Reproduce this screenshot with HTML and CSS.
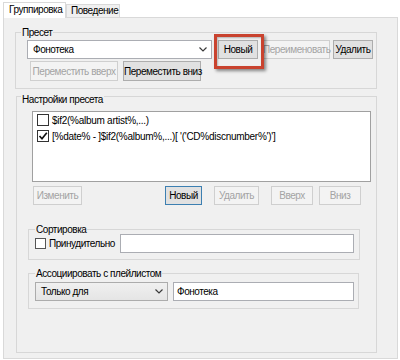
FILE: index.html
```html
<!DOCTYPE html>
<html lang="ru">
<head>
  <meta charset="UTF-8">
  <title>Группировка</title>
  <link rel="stylesheet" href="styles.css">
</head>
<body>
  <div class="tabs">
    <div class="tab tab-active">Группировка</div>
    <div class="tab">Поведение</div>
  </div>
  <div class="page">
    <div class="group group-preset">
      <div class="group-title">Пресет</div>
      <div class="preset-body">
        <div class="row row-top">
          <div class="combo combo-edit">
            <span>Фонотека</span>
            <svg class="chev" viewBox="0 0 8 5"><polyline points="0.5,0.5 4,4 7.5,0.5"/></svg>
          </div>
          <div class="mark-wrap">
            <button class="btn btn-new">Новый</button>
            <span class="mark"></span>
          </div>
          <button class="btn btn-rename" disabled>Переименовать</button>
          <button class="btn btn-delete">Удалить</button>
        </div>
        <div class="row row-move">
          <button class="btn btn-up" disabled>Переместить вверх</button>
          <button class="btn btn-down">Переместить вниз</button>
        </div>
      </div>
    </div>

    <div class="group group-settings">
      <div class="group-title title-settings">Настройки пресета</div>
      <div class="settings-body">
        <div class="listbox">
          <div class="item">
            <span class="check"></span>
            <span>$if2(%album artist%,...)</span>
          </div>
          <div class="item">
            <span class="check"><svg viewBox="0 0 10 10"><path d="M1.5 5 L4 7.8 L8.8 1.8"/></svg></span>
            <span>[%date% - ]$if2(%album%,...)[ '('CD%discnumber%')']</span>
          </div>
        </div>
        <div class="row row-actions">
          <button class="btn btn-edit" disabled>Изменить</button>
          <button class="btn btn-add">Новый</button>
          <button class="btn btn-remove" disabled>Удалить</button>
          <button class="btn btn-upward" disabled>Вверх</button>
          <button class="btn btn-downward" disabled>Вниз</button>
        </div>

        <div class="group group-sort">
          <div class="group-title title-inner">Сортировка</div>
          <div class="row sort-body">
            <span class="check check-small"></span>
            <span class="force-label">Принудительно</span>
            <div class="field field-sort"></div>
          </div>
        </div>

        <div class="group group-assoc">
          <div class="group-title title-assoc">Ассоциировать с плейлистом</div>
          <div class="row assoc-body">
            <div class="combo combo-list">
              <span>Только для</span>
              <svg class="chev" viewBox="0 0 8 5"><polyline points="0.5,0.5 4,4 7.5,0.5"/></svg>
            </div>
            <div class="field field-assoc">Фонотека</div>
          </div>
        </div>
      </div>
    </div>
  </div>
</body>
</html>
```

FILE: styles.css
```css
* { box-sizing: border-box; }
body { margin: 0; background: #fff; color: #000; white-space: nowrap;
       font-family: "Liberation Sans", Arial, sans-serif; font-size: 10px; letter-spacing: -0.45px; }

.tabs { display: flex; align-items: flex-end; height: 17px; padding-left: 3px; }
.tab { width: 54px; height: 13px; line-height: 12px; padding-left: 4px;
       border: 1px solid #d9d9d9; border-bottom: none; background: #f0f0f0; }
.tab-active { position: relative; width: 63px; height: 16px; line-height: 14px;
              padding-left: 5px; margin-bottom: -1px; background: #fff; }

.page { margin-left: 3px; width: 395px; height: 342px; padding: 14px 0 0 11px;
        border: 1px solid #d9d9d9; background: #f0f0f0; }

.group { border: 1px solid #d7d7d7; }
.group-title { width: fit-content; padding: 0 1px; line-height: 14px;
               margin: -7px 0 0 5px; background: #f0f0f0; }

.row { display: flex; align-items: center; }

/* buttons */
.btn { font: inherit; letter-spacing: inherit; color: #000; height: 19px; padding: 0;
       white-space: nowrap; border: 1px solid #adadad; background: #e1e1e1; }
.btn:disabled { color: #a3a3a3; border-color: #cfcfcf; background: #f3f3f3; }

/* preset */
.group-preset { width: 362px; height: 57px; }
.preset-body { padding: 0 3px 0 11px; }
.row-top { height: 19px; }
.combo { height: 19px; display: flex; align-items: center; justify-content: space-between;
         padding: 0 4px 0 5px; border: 1px solid #abadb3; }
.combo-edit { width: 185px; background: #fff; }
.chev { width: 8px; height: 5px; fill: none; stroke: #3a3a3a; stroke-width: 1.2; }
.mark-wrap { position: relative; margin-left: 6px; }
.btn-new { width: 40px; display: block; }
.mark { position: absolute; left: -4px; top: -6px; width: 50px; height: 35px;
        border: 3px solid #c9432f;
        box-shadow: 2px 2px 3px rgba(0,0,0,0.45), inset 1px 1px 2px rgba(0,0,0,0.25); }
.btn-rename { width: 68px; margin-left: 4px; }
.btn-delete { width: 40px; margin-left: 3px; }
.row-move { margin: 2px 0 0 3px; }
.row-move .btn { height: 20px; }
.btn-up { width: 88px; }
.btn-down { width: 78px; margin-left: 5px; }

/* preset settings */
.group-settings { width: 361px; height: 257px; margin: 7px 0 0 1px; }
.title-settings { margin: -4px 0 0 4px; }
.settings-body { padding: 4px 0 0 11px; }
.listbox { width: 339px; height: 71px; margin-left: 4px; padding: 0 0 0 4px;
           border: 1px solid #a0a0a0; background: #fff; letter-spacing: -0.27px; }
.item { display: flex; align-items: center; height: 16px; }
.check { width: 12px; height: 12px; margin-right: 3px; border: 1px solid #333;
         background: #fff; display: flex; }
.check svg { width: 10px; height: 10px; fill: none; stroke: #111; stroke-width: 1.7; }
.row-actions { margin-top: 4px; }
.btn-edit { width: 49px; margin-left: 5px; }
.btn-add { width: 37px; margin-left: 83px; border-color: #3c7fb1; }
.btn-remove { width: 45px; margin-left: 12px; }
.btn-upward { width: 42px; margin-left: 12px; }
.btn-downward { width: 42px; margin-left: 6px; }

.title-inner { margin: -7px 0 -3px 6px; }
.title-assoc { margin: -7px 0 0 6px; }

.group-sort { width: 332px; height: 31px; margin-top: 24px; }
.sort-body { height: 19px; padding: 0 5px 0 6px; }
.check-small { width: 11px; height: 11px; margin-right: 3px; border-color: #555; }
.field { height: 19px; line-height: 17px; padding-left: 3px;
         border: 1px solid #abadb3; background: #fff; }
.field-sort { width: 234px; margin-left: auto; }

.group-assoc { width: 331px; height: 36px; margin-top: 13px; }
.assoc-body { padding: 1px 0 0 6px; }
.combo-list { width: 133px; border-color: #acacac; background: linear-gradient(#f0f0f0, #e5e5e5); }
.field-assoc { width: 181px; margin-left: 5px; }
```
